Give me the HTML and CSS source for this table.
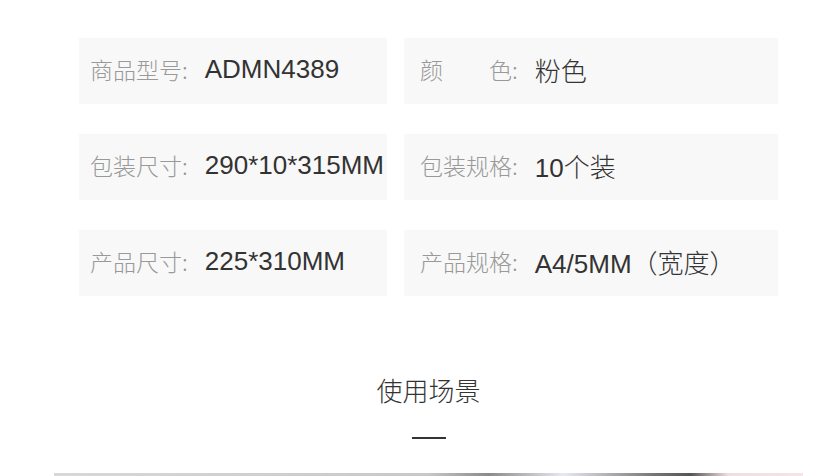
FILE: index.html
```html
<!DOCTYPE html>
<html lang="zh-CN">
<head>
  <meta charset="UTF-8" />
  <title>产品参数</title>
  <link rel="stylesheet" href="styles.css">
</head>
<body>
  <div class="page">

    <!-- 参数表 -->
    <div class="specs">
      <div class="cell left"><span class="label">商品型号:</span><span class="value">ADMN4389</span></div>
      <div class="cell right"><span class="label">颜&emsp;&emsp;色:</span><span class="value">粉色</span></div>
      <div class="cell left"><span class="label">包装尺寸:</span><span class="value">290*10*315MM</span></div>
      <div class="cell right"><span class="label">包装规格:</span><span class="value">10个装</span></div>
      <div class="cell left"><span class="label">产品尺寸:</span><span class="value">225*310MM</span></div>
      <div class="cell right"><span class="label">产品规格:</span><span class="value">A4/5MM（宽度）</span></div>
    </div>

    <!-- 使用场景 -->
    <div class="scene">
      <h2>使用场景</h2>
      <div class="rule"></div>
    </div>

    <div class="photo"></div>
  </div>
</body>
</html>
```

FILE: styles.css
```css
body {
  margin: 0;
  background: #fff;
  font-family: "Liberation Sans", "Noto Sans CJK SC", sans-serif;
  overflow: hidden;
}
.page {
  width: 749px;
  margin-left: 54px;
  padding-top: 38px;
}
.specs {
  display: grid;
  grid-template-columns: 308px 374px;
  column-gap: 17px;
  row-gap: 30px;
  margin-left: 25px;
  width: 699px;
}
.cell {
  height: 66px;
  box-sizing: border-box;
  padding-bottom: 4px;
  background: #f8f8f8;
  display: flex;
  align-items: center;
  white-space: nowrap;
  overflow: hidden;
}
.cell.left {
  padding-left: 11px;
}
.cell.right {
  padding-left: 16px;
}
.label {
  color: #999;
  font-size: 23px;
  font-weight: 300;
  font-family: "Noto Sans CJK SC", sans-serif;
  margin-right: 17px;
}
.value {
  color: #333;
  font-size: 26px;
  font-weight: 300;
}
.scene {
  display: flex;
  flex-direction: column;
  align-items: center;
  padding-top: 79px;
}
.scene h2 {
  margin: 0;
  font-size: 26px;
  font-weight: 300;
  line-height: 30px;
  color: #333;
  font-family: "Noto Sans CJK SC", sans-serif;
}
.rule {
  width: 34px;
  height: 2px;
  background: #333;
  margin-top: 32px;
}
.photo {
  margin-top: 34px;
  height: 3px;
  background: linear-gradient(90deg, #d8d8d8 0%, #c8c8c8 50%, #8a8a8a 58%, #e8e8f0 68%, #777 80%, #555 85%, #f0dde0 90%, #f5e5e8 100%);
}
```
